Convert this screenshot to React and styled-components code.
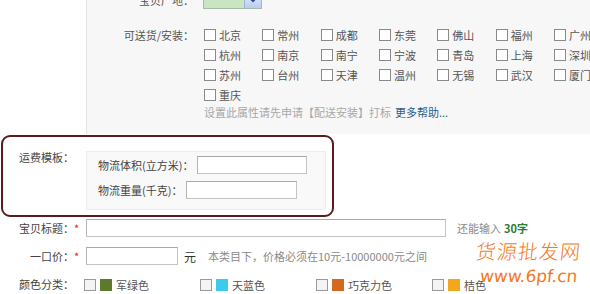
import React from "react";
import styled, { createGlobalStyle } from "styled-components";

const Global = createGlobalStyle`
  html, body { margin: 0; padding: 0; background: #fff; }
  body {
    font-family: "Noto Sans CJK SC", "Liberation Sans", sans-serif;
    font-size: 11px;
    color: #444;
  }
`;

const Page = styled.div`
  position: relative;
  width: 590px;
  height: 294px;
  overflow: hidden;
`;

const Shift = styled.div`
  margin-top: -13px;
`;

const Row = styled.div`
  display: grid;
  grid-template-columns: ${(p) => p.$labelWidth || 86}px 1fr;
  align-items: ${(p) => p.$align || "center"};
`;

const Label = styled.div`
  text-align: right;
  padding-right: 6px;
  line-height: 14px;
  white-space: nowrap;
  color: #444;
`;

const Star = styled.span`
  display: inline-block;
  width: 6px;
  text-align: left;
  color: #d22;
  visibility: ${(p) => (p.$show ? "visible" : "hidden")};
`;

const GrayPanel = styled.div`
  background: #f7f7f7;
  border-left: 1px solid #e2e2e2;
  padding: 4px 0 15px 0;
  display: flex;
  flex-direction: column;
  gap: 16px;
  min-width: 0;
`;

const PanelRow = styled.div`
  display: grid;
  grid-template-columns: 107px 1fr;
  column-gap: 10px;
  align-items: ${(p) => p.$align || "center"};
`;

const PanelLabel = styled.div`
  text-align: right;
  line-height: ${(p) => p.$lh || 14}px;
  white-space: nowrap;
  color: #555;
`;

const Select = styled.div`
  width: 59px;
  height: 18px;
  box-sizing: border-box;
  border: 1px solid #a9b8a9;
  background: #c8e6c2;
  display: flex;
  justify-content: flex-end;
  margin-left: -1px;
`;

const SelectArrow = styled.div`
  width: 16px;
  height: 100%;
  background: linear-gradient(#e6eefc, #b9cdf0);
  border-left: 1px solid #9fb1d6;
  display: flex;
  align-items: center;
  justify-content: center;
`;

const CityBlock = styled.div`
  display: flex;
  flex-direction: column;
  min-width: 0;
`;

const CityGrid = styled.div`
  display: grid;
  grid-template-columns: repeat(7, 58.33px);
  grid-auto-rows: 20px;
  width: 420px;
`;

const CheckItem = styled.div`
  display: flex;
  align-items: center;
  gap: 3px;
  white-space: nowrap;
  color: #555;
`;

const Box = styled.span`
  display: inline-block;
  width: 12px;
  height: 12px;
  box-sizing: border-box;
  border: 1px solid ${(p) => p.$border || "#8a8a8a"};
  background: ${(p) => p.$bg || "#fff"};
  flex: none;
`;

const Hint = styled.div`
  line-height: 14px;
  color: #a8a8a8;
  white-space: nowrap;
`;

const HelpLink = styled.span`
  color: #2a5d8a;
  margin-left: 4px;
`;

const Highlight = styled.div`
  margin: 1px 0 0 1px;
  width: 333px;
  box-sizing: border-box;
  border: 2px solid #5a1c1e;
  border-radius: 9px;
  padding: 13px 6px 5px 0;
  display: grid;
  grid-template-columns: 83px 1fr;
  align-items: start;
`;

const InnerPanel = styled.div`
  margin-top: 1px;
  background: #f9f9f9;
  border: 1px solid #ededed;
  padding: 4px 0 10px 11px;
  display: flex;
  flex-direction: column;
  gap: 7px;
`;

const InlineField = styled.div`
  display: flex;
  align-items: center;
  gap: 4px;
  color: #444;
  white-space: nowrap;
`;

const Input = styled.div`
  width: ${(p) => p.$w}px;
  height: 18px;
  box-sizing: border-box;
  background: #fff;
  border: 1px solid #c4c4c4;
  border-top-color: #a9a9a9;
  border-left-color: #b5b5b5;
  flex: none;
`;

const FormRows = styled.div`
  margin-top: 2px;
  display: flex;
  flex-direction: column;
  gap: 10px;
`;

const Content = styled.div`
  display: flex;
  align-items: center;
  white-space: nowrap;
  min-height: 18px;
`;

const Unit = styled.span`
  margin-left: 6px;
  color: #333;
  font-size: 12px;
`;

const Note = styled.span`
  margin-left: ${(p) => p.$ml || 11}px;
  color: #8a8a8a;
`;

const Count = styled.b`
  color: #2e7d2e;
  margin-left: 3px;
`;

const ColorList = styled.div`
  display: flex;
  margin-left: -2px;
  margin-top: 2px;
`;

const ColorItem = styled.div`
  width: 116px;
  display: flex;
  align-items: center;
  white-space: nowrap;
  color: #555;
`;

const Swatch = styled.span`
  display: inline-block;
  width: 12px;
  height: 12px;
  background: ${(p) => p.$c};
  margin: 0 4px 0 4px;
`;

const Watermark = styled.div`
  position: absolute;
  right: 10px;
  top: 237px;
  color: #f07a22;
  display: flex;
  flex-direction: column;
  align-items: flex-end;
  transform: skewX(-6deg);
  pointer-events: none;
`;

const WmTitle = styled.div`
  font-family: "Noto Sans CJK SC", sans-serif;
  font-weight: 300;
  font-size: 20px;
  letter-spacing: 1px;
  line-height: 28px;
`;

const WmUrl = styled.div`
  font-family: "DejaVu Sans", sans-serif;
  font-size: 17px;
  line-height: 22px;
  margin-right: 1px;
`;

const cities = [
  "北京", "常州", "成都", "东莞", "佛山", "福州", "广州",
  "杭州", "南京", "南宁", "宁波", "青岛", "上海", "深圳",
  "苏州", "台州", "天津", "温州", "无锡", "武汉", "厦门",
  "重庆",
];

const colors = [
  { name: "军绿色", c: "#5b7a2c" },
  { name: "天蓝色", c: "#3ccbea" },
  { name: "巧克力色", c: "#d2691e" },
  { name: "桔色", c: "#f4a71c" },
];

export default function App() {
  return (
    <Page>
      <Global />
      <Shift>
        <Row $align="stretch">
          <div />
          <GrayPanel>
            <PanelRow>
              <PanelLabel>宝贝产地：</PanelLabel>
              <Select>
                <SelectArrow>
                  <svg width="8" height="6" viewBox="0 0 8 6">
                    <path d="M1 1.2 L4 4.4 L7 1.2" fill="none" stroke="#24489a" strokeWidth="1.6" />
                  </svg>
                </SelectArrow>
              </Select>
            </PanelRow>
            <PanelRow $align="start">
              <PanelLabel $lh={20}>可送货/安装：</PanelLabel>
              <CityBlock>
                <CityGrid>
                  {cities.map((c) => (
                    <CheckItem key={c}>
                      <Box />
                      {c}
                    </CheckItem>
                  ))}
                </CityGrid>
                <Hint>
                  设置此属性请先申请【配送安装】打标
                  <HelpLink>更多帮助...</HelpLink>
                </Hint>
              </CityBlock>
            </PanelRow>
          </GrayPanel>
        </Row>
      </Shift>

      <Highlight>
        <Label>
          运费模板：<Star>*</Star>
        </Label>
        <InnerPanel>
          <InlineField>
            物流体积(立方米)：<Input $w={110} />
          </InlineField>
          <InlineField>
            物流重量(千克)：<Input $w={111} />
          </InlineField>
        </InnerPanel>
      </Highlight>

      <FormRows>
        <Row>
          <Label>
            宝贝标题：<Star $show>*</Star>
          </Label>
          <Content>
            <Input $w={360} />
            <Note>
              还能输入<Count>30字</Count>
            </Note>
          </Content>
        </Row>
        <Row>
          <Label>
            一口价：<Star $show>*</Star>
          </Label>
          <Content>
            <Input $w={92} />
            <Unit>元</Unit>
            <Note $ml={12}>本类目下，价格必须在10元-10000000元之间</Note>
          </Content>
        </Row>
        <Row>
          <Label>
            颜色分类：<Star>*</Star>
          </Label>
          <Content>
            <ColorList>
              {colors.map((c) => (
                <ColorItem key={c.name}>
                  <Box $border="#9a9a9a" $bg="#f4f4f4" />
                  <Swatch $c={c.c} />
                  {c.name}
                </ColorItem>
              ))}
            </ColorList>
          </Content>
        </Row>
      </FormRows>

      <Watermark>
        <WmTitle>货源批发网</WmTitle>
        <WmUrl>www.6pf.cn</WmUrl>
      </Watermark>
    </Page>
  );
}
